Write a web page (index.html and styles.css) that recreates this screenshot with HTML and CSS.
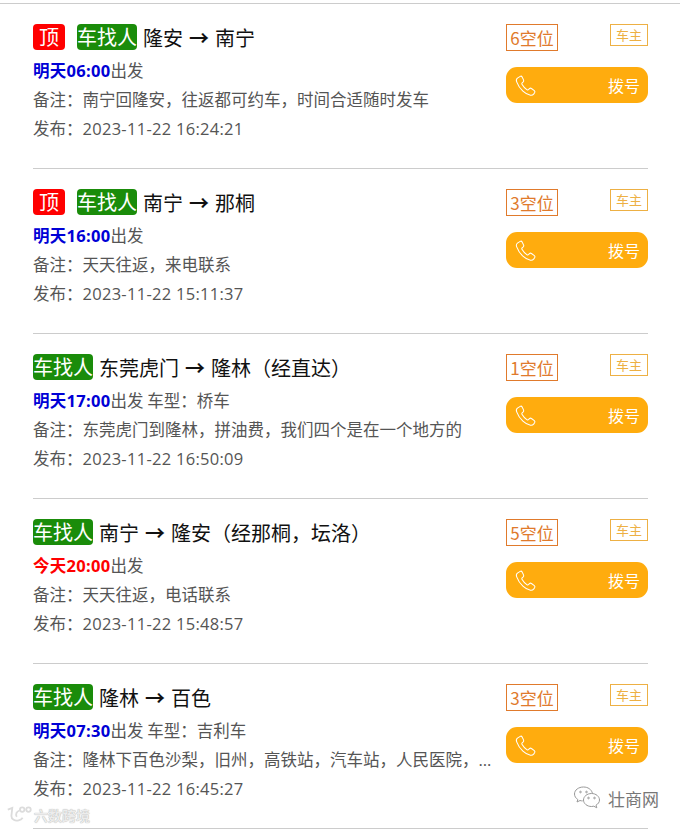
FILE: index.html
```html
<!DOCTYPE html>
<html lang="zh-CN">
<head>
  <meta charset="UTF-8">
  <meta name="viewport" content="width=device-width, initial-scale=1.0">
  <title>车找人</title>
  <link rel="stylesheet" href="styles.css">
</head>
<body>
  <div class="list">
    <div class="item">
      <div class="info">
        <div class="route"><span class="tag top">顶</span><span class="tag green">车找人</span><span>隆安 <b class="arrow">→</b> 南宁</span></div>
        <div class="line"><b class="tomorrow">明天<i class="num">06:00</i></b>出发</div>
        <div class="line">备注：南宁回隆安，往返都可约车，时间合适随时发车</div>
        <div class="line">发布：<span class="num">2023-11-22 16:24:21</span></div>
      </div>
      <div class="side">
        <div class="side-top"><span class="seats">6空位</span><span class="role">车主</span></div>
        <a class="call"><svg class="phone" viewBox="0 0 24 24"><path d="M6.5 2.5 3.600 4.300C2.400 5.200 2.200 6.600 2.800 8.200c1.500 4 3.700 7.100 6.500 9.700 2.500 2.300 5.200 3.900 7.900 4.300 1.500.2 2.700-.4 3.500-1.500l.9-1.400c.4-.7.2-1.500-.4-2l-3-2.200c-.7-.5-1.500-.4-2.100.2l-1 1.100c-.4.4-.9.4-1.400.1-2.300-1.600-4-3.500-5.400-5.900-.3-.5-.2-1 .2-1.400l1.100-1c.6-.6.7-1.400.3-2.100L8.400 3c-.4-.7-1.200-.9-1.900-.5Z"/></svg><span>拨号</span></a>
      </div>
    </div>
    <div class="item">
      <div class="info">
        <div class="route"><span class="tag top">顶</span><span class="tag green">车找人</span><span>南宁 <b class="arrow">→</b> 那桐</span></div>
        <div class="line"><b class="tomorrow">明天<i class="num">16:00</i></b>出发</div>
        <div class="line">备注：天天往返，来电联系</div>
        <div class="line">发布：<span class="num">2023-11-22 15:11:37</span></div>
      </div>
      <div class="side">
        <div class="side-top"><span class="seats">3空位</span><span class="role">车主</span></div>
        <a class="call"><svg class="phone" viewBox="0 0 24 24"><path d="M6.5 2.5 3.600 4.300C2.400 5.200 2.200 6.600 2.800 8.200c1.500 4 3.700 7.100 6.500 9.700 2.500 2.300 5.200 3.900 7.900 4.300 1.500.2 2.700-.4 3.500-1.500l.9-1.400c.4-.7.2-1.500-.4-2l-3-2.200c-.7-.5-1.500-.4-2.100.2l-1 1.100c-.4.4-.9.4-1.400.1-2.300-1.600-4-3.500-5.400-5.900-.3-.5-.2-1 .2-1.400l1.100-1c.6-.6.7-1.400.3-2.100L8.400 3c-.4-.7-1.200-.9-1.900-.5Z"/></svg><span>拨号</span></a>
      </div>
    </div>
    <div class="item">
      <div class="info">
        <div class="route"><span class="tag green">车找人</span><span>东莞虎门 <b class="arrow">→</b> 隆林（经直达）</span></div>
        <div class="line"><b class="tomorrow">明天<i class="num">17:00</i></b>出发 车型：桥车</div>
        <div class="line">备注：东莞虎门到隆林，拼油费，我们四个是在一个地方的</div>
        <div class="line">发布：<span class="num">2023-11-22 16:50:09</span></div>
      </div>
      <div class="side">
        <div class="side-top"><span class="seats">1空位</span><span class="role">车主</span></div>
        <a class="call"><svg class="phone" viewBox="0 0 24 24"><path d="M6.5 2.5 3.600 4.300C2.400 5.200 2.200 6.600 2.800 8.200c1.500 4 3.700 7.100 6.500 9.700 2.500 2.300 5.200 3.900 7.900 4.300 1.500.2 2.700-.4 3.500-1.500l.9-1.400c.4-.7.2-1.500-.4-2l-3-2.200c-.7-.5-1.500-.4-2.100.2l-1 1.100c-.4.4-.9.4-1.400.1-2.300-1.600-4-3.500-5.400-5.900-.3-.5-.2-1 .2-1.400l1.100-1c.6-.6.7-1.400.3-2.100L8.400 3c-.4-.7-1.200-.9-1.900-.5Z"/></svg><span>拨号</span></a>
      </div>
    </div>
    <div class="item">
      <div class="info">
        <div class="route"><span class="tag green">车找人</span><span>南宁 <b class="arrow">→</b> 隆安（经那桐，坛洛）</span></div>
        <div class="line"><b class="today">今天<i class="num">20:00</i></b>出发</div>
        <div class="line">备注：天天往返，电话联系</div>
        <div class="line">发布：<span class="num">2023-11-22 15:48:57</span></div>
      </div>
      <div class="side">
        <div class="side-top"><span class="seats">5空位</span><span class="role">车主</span></div>
        <a class="call"><svg class="phone" viewBox="0 0 24 24"><path d="M6.5 2.5 3.600 4.300C2.400 5.200 2.200 6.600 2.800 8.200c1.500 4 3.700 7.100 6.500 9.700 2.500 2.300 5.200 3.900 7.900 4.300 1.500.2 2.700-.4 3.500-1.500l.9-1.400c.4-.7.2-1.500-.4-2l-3-2.200c-.7-.5-1.500-.4-2.100.2l-1 1.100c-.4.4-.9.4-1.400.1-2.300-1.600-4-3.500-5.400-5.900-.3-.5-.2-1 .2-1.400l1.100-1c.6-.6.7-1.400.3-2.100L8.400 3c-.4-.7-1.200-.9-1.900-.5Z"/></svg><span>拨号</span></a>
      </div>
    </div>
    <div class="item">
      <div class="info">
        <div class="route"><span class="tag green">车找人</span><span>隆林 <b class="arrow">→</b> 百色</span></div>
        <div class="line"><b class="tomorrow">明天<i class="num">07:30</i></b>出发 车型：吉利车</div>
        <div class="line">备注：隆林下百色沙梨，旧州，高铁站，汽车站，人民医院，<span class="num">…</span></div>
        <div class="line">发布：<span class="num">2023-11-22 16:45:27</span></div>
      </div>
      <div class="side">
        <div class="side-top"><span class="seats">3空位</span><span class="role">车主</span></div>
        <a class="call"><svg class="phone" viewBox="0 0 24 24"><path d="M6.5 2.5 3.600 4.300C2.400 5.200 2.200 6.600 2.800 8.200c1.500 4 3.700 7.100 6.500 9.700 2.500 2.300 5.200 3.900 7.900 4.300 1.500.2 2.700-.4 3.500-1.500l.9-1.400c.4-.7.2-1.500-.4-2l-3-2.200c-.7-.5-1.500-.4-2.100.2l-1 1.100c-.4.4-.9.4-1.400.1-2.300-1.600-4-3.500-5.400-5.900-.3-.5-.2-1 .2-1.400l1.100-1c.6-.6.7-1.400.3-2.100L8.400 3c-.4-.7-1.200-.9-1.900-.5Z"/></svg><span>拨号</span></a>
      </div>
    </div>
  </div>

  <div class="mark mark-left">
    <svg class="mark-logo" viewBox="0 0 30 20"><path d="M2 4 7 2 6 11c0 4 4 6 8 5 2-.5 3.500-1.500 4.500-3"/><path d="M15 5c-3 1-5 4-3 7"/><circle cx="18" cy="4" r="2.500"/><circle cx="25" cy="4" r="2.500"/></svg>
    <span>六数跨境</span>
  </div>
  <div class="mark mark-right">
    <svg class="mark-wechat" viewBox="0 0 28 26"><path d="M10 2C5 2 1 5 1 9c0 2.300 1.300 4.200 3.300 5.500L3.500 17l3-1.500c1 .3 1.800.4 2.700.4"/><path d="M10 2c4.500 0 8 2.500 8.800 6"/><path d="M18 8.500c-4.500 0-8 3-8 6.500s3.500 6.500 8 6.500c.8 0 1.600-.1 2.300-.3l3 1.600-.8-2.600c2-1.200 3.500-3 3.500-5.200 0-3.500-3.500-6.500-8-6.500Z"/><circle cx="7" cy="7" r=".8"/><circle cx="13" cy="7" r=".8"/><circle cx="15" cy="13" r=".8"/><circle cx="21" cy="13" r=".8"/></svg>
    <span>壮商网</span>
  </div>
</body>
</html>
```

FILE: styles.css
```css
* {
  box-sizing: border-box;
}

body {
  margin: 0;
  background: #fff;
  font-family: "Noto Sans CJK SC", "Noto Sans", sans-serif;
  position: relative;
  height: 829px;
  overflow: hidden;
}

.list {
  margin-top: 3px;
  border-top: 1px solid #ccc;
  padding: 0 32px 0 33px;
}

.item {
  display: flex;
  justify-content: space-between;
  height: 165px;
  padding-top: 20px;
  border-bottom: 1px solid #ccc;
}

.info {
  width: 462px;
}

.route {
  display: flex;
  align-items: center;
  height: 26px;
  font-size: 20px;
  color: #111;
  white-space: nowrap;
  word-spacing: 1.5px;
}

.arrow {
  font-weight: 700;
}

.tag {
  height: 26px;
  line-height: 25px;
  border-radius: 4px;
  color: #fff;
  margin-right: 6px;
}

.tag.top {
  width: 32px;
  text-align: center;
  background: #f00;
  margin-right: 12px;
}

.tag.green {
  width: 60px;
  text-align: center;
  background: #1a8c0a;
}

.line {
  margin-top: 4px;
  height: 25px;
  line-height: 25px;
  font-size: 16.5px;
  color: #555;
  white-space: nowrap;
}

.route + .line {
  margin-top: 8px;
}

.num {
  font-family: "Open Sans", "Noto Sans CJK SC", sans-serif;
  font-style: normal;
  letter-spacing: .28px;
}

.tomorrow {
  color: #0000d6;
  letter-spacing: .3px;
}

.today {
  color: #f00;
  letter-spacing: .3px;
}

.side {
  width: 142px;
}

.side-top {
  display: flex;
  justify-content: space-between;
  align-items: flex-start;
  height: 43px;
}

.seats {
  width: 52px;
  height: 27px;
  line-height: 25px;
  border: 1px solid #e07a2c;
  color: #e07a2c;
  font-size: 17px;
  text-align: center;
}

.role {
  width: 38px;
  height: 22px;
  line-height: 19px;
  border: 1px solid #edb044;
  color: #edb044;
  font-size: 13px;
  text-align: center;
}

.call {
  display: flex;
  justify-content: space-between;
  align-items: center;
  height: 36px;
  padding: 0 8px;
  background: #ffac0e;
  border-radius: 11px;
  color: #fff;
  font-size: 16px;
}

.phone {
  width: 23px;
  height: 23px;
  fill: none;
  stroke: #fff;
  stroke-width: 1.1;
}

.mark {
  position: absolute;
  display: flex;
  align-items: center;
}

.mark-left {
  left: 6px;
  top: 805px;
  gap: 1px;
  color: #ececec;
  font-size: 14px;
  font-weight: 700;
  text-shadow: 0 0 1px #999;
}

.mark-logo {
  width: 27px;
  height: 20px;
  fill: none;
  stroke: #dcdcdc;
  stroke-width: 2;
}

.mark-right {
  left: 573px;
  top: 785px;
  gap: 6px;
  color: #777;
  font-size: 17px;
}

.mark-wechat {
  width: 29px;
  height: 26px;
  fill: none;
  stroke: #999;
  stroke-width: 1;
}
```
